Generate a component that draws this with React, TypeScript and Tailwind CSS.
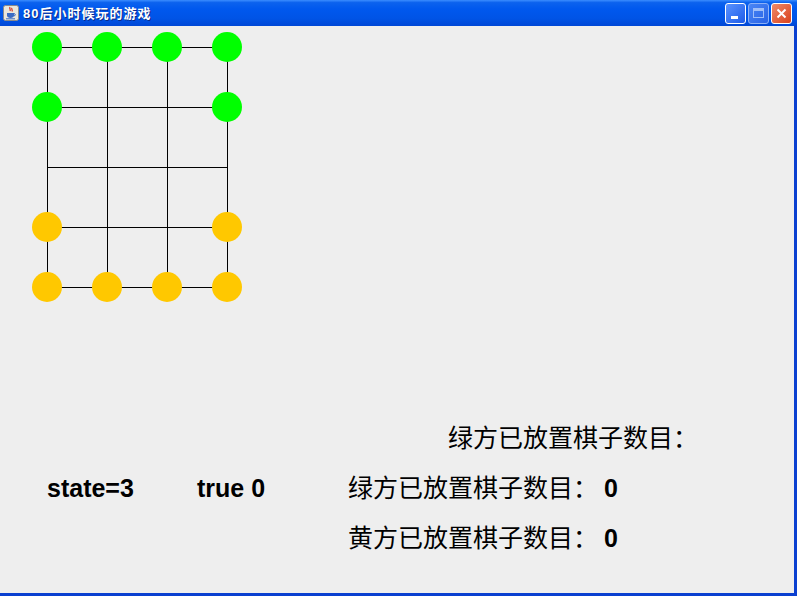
import React from 'react';

const GREEN = '#00ff00';
const ORANGE = '#ffc800';

const stones: { x: number; y: number; c: string }[] = [
  { x: 47, y: 47, c: GREEN },
  { x: 107, y: 47, c: GREEN },
  { x: 167, y: 47, c: GREEN },
  { x: 227, y: 47, c: GREEN },
  { x: 47, y: 107, c: GREEN },
  { x: 227, y: 107, c: GREEN },
  { x: 47, y: 227, c: ORANGE },
  { x: 227, y: 227, c: ORANGE },
  { x: 47, y: 287, c: ORANGE },
  { x: 107, y: 287, c: ORANGE },
  { x: 167, y: 287, c: ORANGE },
  { x: 227, y: 287, c: ORANGE },
];

const cols = [47, 107, 167, 227];
const rows = [47, 107, 167, 227, 287];

const JavaIcon = () => (
  <svg width="16" height="16" viewBox="0 0 16 16">
    <rect x="0.5" y="0.5" width="15" height="15" rx="2" fill="#e9e6dc" stroke="#8a8a8a" />
    <path d="M7 2c-1 1.5 1 2.5 0 4M9 3c-1 1.2 1 2 0 3.5" stroke="#d2301c" strokeWidth="1.2" fill="none" />
    <path d="M4 8h7v2.5c0 1.5-1.5 2.5-3.5 2.5S4 12 4 10.5z" fill="#3a6bc4" />
    <path d="M11 8.6c1.8 0 1.8 2.3 0 2.3" stroke="#3a6bc4" strokeWidth="1" fill="none" />
    <rect x="3" y="13.3" width="9" height="1" fill="#3a6bc4" />
  </svg>
);

const Board = () => (
  <svg width="260" height="300" viewBox="0 26 260 300" className="block">
    {cols.map((x) => (
      <line key={'c' + x} x1={x} y1={47} x2={x} y2={287} stroke="#000" strokeWidth="1" shapeRendering="crispEdges" />
    ))}
    {rows.map((y) => (
      <line key={'r' + y} x1={47} y1={y} x2={227} y2={y} stroke="#000" strokeWidth="1" shapeRendering="crispEdges" />
    ))}
    {stones.map((s, i) => (
      <circle key={i} cx={s.x} cy={s.y} r="15" fill={s.c} />
    ))}
  </svg>
);

export default function App() {
  return (
    <div className="w-[797px] h-[596px] flex flex-col overflow-hidden bg-[#0a4fdc]">
      {/* title bar */}
      <div className="h-[26px] flex items-center pl-[3px] pr-[5px] bg-[linear-gradient(180deg,#3b8dff_0%,#0c62ee_10%,#0058ee_35%,#0054e6_70%,#0047d6_100%)]">
        <JavaIcon />
        <span
          className="ml-[4px] text-white font-bold text-[13px] tracking-[1px] leading-none [text-shadow:1px_1px_0_#0a2a8a]"
          style={{ fontFamily: '"Liberation Sans", "Noto Sans CJK SC", sans-serif' }}
        >
          80后小时候玩的游戏
        </span>
        <div className="ml-auto flex gap-[2px]">
          <div className="w-[21px] h-[21px] rounded-[3px] border border-white bg-[linear-gradient(135deg,#5b93ff,#1d5be8)] flex items-end pl-[5px] pb-[4px]">
            <div className="w-[7px] h-[3px] bg-white" />
          </div>
          <div className="w-[21px] h-[21px] rounded-[3px] border border-[#8db1f7] bg-[linear-gradient(135deg,#4a86f5,#2963e6)] flex items-center justify-center">
            <div className="w-[11px] h-[10px] border border-[#9fbef8] border-t-[3px]" />
          </div>
          <div className="w-[21px] h-[21px] rounded-[3px] border border-white bg-[linear-gradient(135deg,#f08a6a,#d9421c)] flex items-center justify-center">
            <svg width="11" height="11" viewBox="0 0 11 11">
              <path d="M1.5 1.5l8 8M9.5 1.5l-8 8" stroke="#fff" strokeWidth="2" />
            </svg>
          </div>
        </div>
      </div>

      {/* content */}
      <div
        className="flex-1 bg-[#eeeeee] border-r-[3px] border-b-[3px] border-[#0a3fd0] flex flex-col text-black [text-spacing-trim:space-all]"
        style={{ fontFamily: '"Liberation Sans", "Noto Sans CJK SC", sans-serif' }}
      >
        <Board />
        <div className="mt-[97px] flex flex-col gap-[20px] text-[25px] leading-[30px] font-bold">
          <div className="pl-[448px] font-normal">绿方已放置棋子数目：</div>
          <div className="flex">
            <span className="pl-[47px] w-[197px]">state=3</span>
            <span className="w-[151px]">true 0</span>
            <span>
              <span className="font-normal">绿方已放置棋子数目：</span>
              <span className="ml-[6px]">0</span>
            </span>
          </div>
          <div className="pl-[348px]">
            <span className="font-normal">黄方已放置棋子数目：</span>
            <span className="ml-[6px]">0</span>
          </div>
        </div>
      </div>
    </div>
  );
}
